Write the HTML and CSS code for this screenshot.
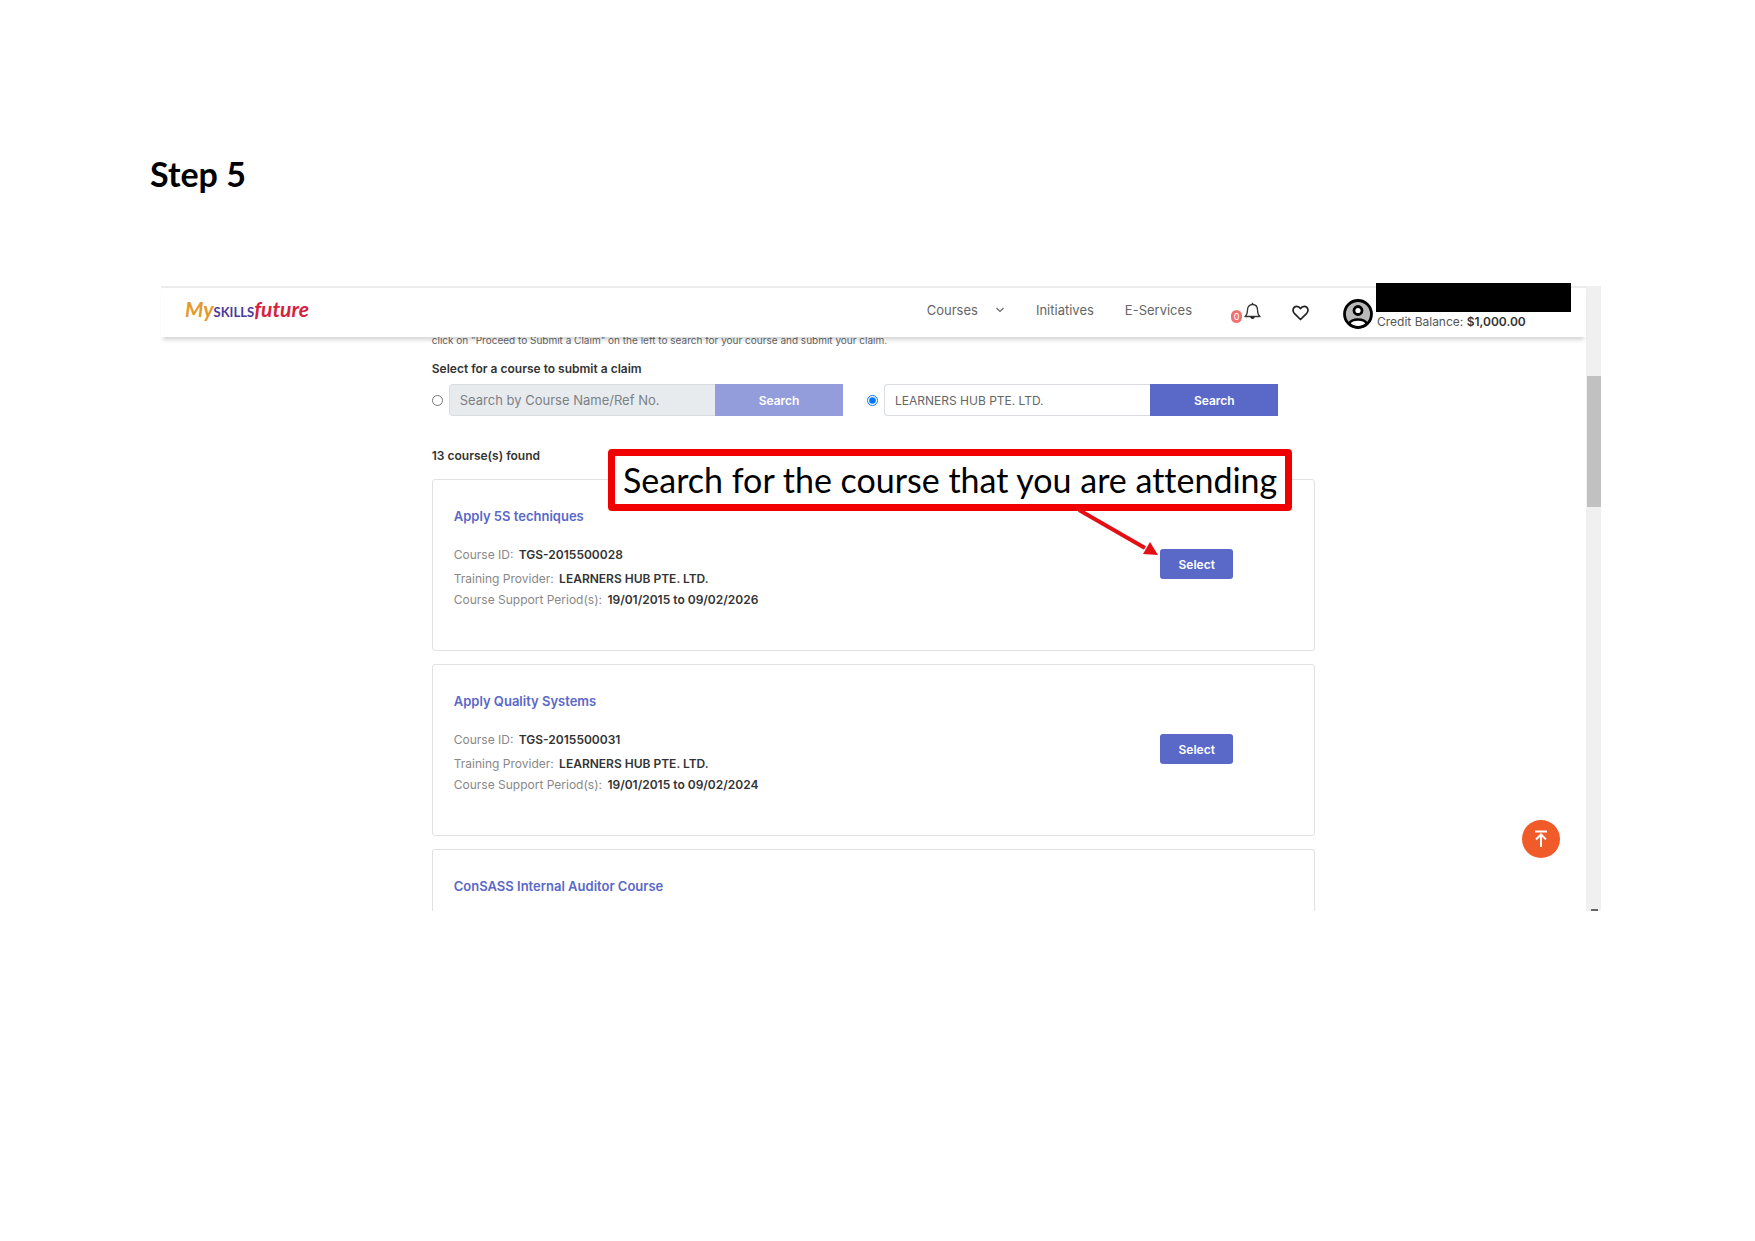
FILE: index.html
```html
<!DOCTYPE html>
<html lang="en">
<head>
  <meta charset="utf-8">
  <title>Step 5</title>
  <meta name="viewport" content="width=device-width, initial-scale=1.0">
  <link rel="stylesheet" href="styles.css">
</head>
<body>

  <h1>Step 5</h1>

  <div class="screen">
    <div class="view">
      <header class="topbar">
        <a class="logo" href="#"><span class="logo-my">My</span><span class="logo-skills">SKILLS</span><span class="logo-future">future</span></a>
        <nav class="menu">
          <a class="courses" href="#">Courses
            <svg width="10" height="6" viewBox="0 0 10 6"><path d="M1.5 1l3.5 3.5L8.500 1" fill="none" stroke="#666" stroke-width="1.2"/></svg>
          </a>
          <a href="#">Initiatives</a>
          <a href="#">E-Services</a>
        </nav>
        <button class="icon-btn bell" aria-label="Notifications">
          <span class="count">0</span>
          <svg width="17" height="18" viewBox="0 0 17 18"><path d="M1 14.500c2-1.500 2.500-3 2.500-6.500 0-3.500 2-5.500 5-5.500s5 2 5 5.500c0 3.500.5 5 2.500 6.500z" fill="none" stroke="#333" stroke-width="1.300" stroke-linejoin="round"/><path d="M8.500 2.500V.8" stroke="#333" stroke-width="1.500"/><path d="M6.300 15h4.400a2.200 2 0 0 1-4.400 0z" fill="#222"/></svg>
        </button>
        <button class="icon-btn heart" aria-label="Favourites">
          <svg width="17" height="16" viewBox="0 0 17 16"><path d="M8.500 14.500L2.300 8.300C-.2 5.500 1.300 1.300 4.700 1.300c1.700 0 3 .9 3.800 2.400.8-1.500 2.100-2.400 3.800-2.400 3.400 0 4.900 4.200 2.400 7z" fill="none" stroke="#222" stroke-width="1.700" stroke-linejoin="round"/></svg>
        </button>
        <div class="account">
          <svg width="30" height="30" viewBox="0 0 30 30"><circle cx="15" cy="15" r="13.500" fill="#b9b9b9"/><path d="M6 24.500c3-5.500 15-5.500 18 0-4.500 5-13.500 5-18 0z" fill="#fff" stroke="#000" stroke-width="2.500"/><circle cx="15" cy="11.500" r="4" fill="#fff" stroke="#000" stroke-width="2.800"/><circle cx="15" cy="15" r="13.500" fill="none" stroke="#000" stroke-width="2.800"/></svg>
          <span class="balance">Credit Balance: <b>$1,000.00</b></span>
          <span class="redacted"></span>
        </div>
      </header>

      <main class="content">
        <p class="hint">click on "Proceed to Submit a Claim" on the left to search for your course and submit your claim.</p>

        <h2 class="label">Select for a course to submit a claim</h2>
        <form class="search">
          <input type="radio" name="by" id="byCourse" aria-label="Search by course">
          <div class="group off">
            <input type="text" placeholder="Search by Course Name/Ref No." aria-label="Course name or ref no." disabled>
            <button type="button" disabled>Search</button>
          </div>
          <input type="radio" name="by" id="byProvider" aria-label="Search by training provider" checked>
          <div class="group">
            <input class="provider" type="text" value="LEARNERS HUB PTE. LTD." aria-label="Training provider">
            <button type="button">Search</button>
          </div>
        </form>

        <h2 class="found">13 course(s) found</h2>

        <div class="cards">
          <article class="card">
            <div>
              <h3><a href="#">Apply 5S techniques</a></h3>
              <p class="id">Course ID: <b>TGS-2015500028</b></p>
              <p>Training Provider: <b>LEARNERS HUB PTE. LTD.</b></p>
              <p>Course Support Period(s): <b>19/01/2015 to 09/02/2026</b></p>
            </div>
            <button class="select">Select</button>

            <div class="callout">
              Search for the course that you are attending
              <svg class="arrow" width="84" height="50" viewBox="0 0 84 50"><path d="M2 1l66 38" stroke="#e30f14" stroke-width="4"/><path d="M81 46l-15-1 7-12z" fill="#e30f14"/></svg>
            </div>
          </article>

          <article class="card">
            <div>
              <h3><a href="#">Apply Quality Systems</a></h3>
              <p class="id">Course ID: <b>TGS-2015500031</b></p>
              <p>Training Provider: <b>LEARNERS HUB PTE. LTD.</b></p>
              <p>Course Support Period(s): <b>19/01/2015 to 09/02/2024</b></p>
            </div>
            <button class="select">Select</button>
          </article>

          <article class="card cut">
            <h3><a href="#">ConSASS Internal Auditor Course</a></h3>
          </article>
        </div>
      </main>
    </div>

    <div class="scrollbar"><div class="thumb"></div><div class="tick"></div></div>

    <button class="to-top" aria-label="Back to top">
      <svg width="14" height="18" viewBox="0 0 14 18"><path d="M1 1.500h12M7 17V5M2 9.500l5-5 5 5" fill="none" stroke="#fff" stroke-width="2"/></svg>
    </button>
  </div>

</body>
</html>
```

FILE: styles.css
```css
* { box-sizing: border-box; }
body { margin: 0; padding: 154px 154px 40px 150px; background: #fff; color: #333; font-family: Inter, "Liberation Sans", sans-serif; font-size: 12px; }
h1, h2, h3, p { margin: 0; }
h1 { font: bold 34px/40px Lato, sans-serif; color: #000; }
a { color: inherit; text-decoration: none; }
button { font-family: inherit; border: 0; cursor: pointer; }

.screen { position: relative; display: flex; margin: 92px 0 0 11px; }
.view { flex: 1; }

/* top bar */
.topbar {
  position: relative; z-index: 1;
  display: flex; align-items: center;
  height: 51px; padding: 0 61px 0 24px;
  background: #fff; border-top: 2px solid #ececec;
  box-shadow: 0 5px 4px -2px rgba(0, 0, 0, .16);
}
.logo { display: flex; align-items: baseline; margin: 0 auto 8px 0; font-family: Lato, sans-serif; font-weight: bold; }
.logo-my { color: #e39a2d; font-size: 21px; font-style: italic; }
.logo-skills { color: #4b3a9c; font-size: 13px; }
.logo-future { color: #d4233f; font-size: 21px; font-style: italic; }
.menu { display: flex; gap: 31px; margin-bottom: 5px; color: #666; font-size: 13px; }
.courses { display: flex; align-items: center; gap: 17px; }
.icon-btn { display: flex; padding: 0; background: none; }
.bell { align-items: flex-end; gap: 2px; margin-left: 39px; }
.count { width: 11px; height: 13px; border-radius: 6px; background: #ee7474; color: #fff; font-size: 9px; line-height: 13px; }
.bell svg { margin-bottom: 3px; }
.heart { margin: 0 34px 0 31px; }
.account { position: relative; display: flex; gap: 4px; width: 182px; padding-top: 2px; color: #555; }
.account svg { flex-shrink: 0; }
.account b { color: #333; font-weight: 600; }
.balance { margin-top: 15px; white-space: nowrap; }
.redacted { position: absolute; top: -14px; left: 33px; width: 195px; height: 29px; background: #000; }

/* page content */
.content { width: 62%; margin: 0 auto; }
.hint { margin-top: -5px; color: #666; font-size: 10px; line-height: 16px; }
.label, .found { font-size: 12px; font-weight: 600; line-height: 20px; }
.label { margin-top: 11px; }
.found { margin-top: 30px; }
.search { display: flex; align-items: center; margin: 5px 37px 0 0; }
.search input[type=radio] { width: 11px; height: 11px; margin: 0 6px 0 0; }
.group { flex: 1; display: flex; height: 32px; }
.group.off { margin-right: 24px; }
.group input { flex: 1; min-width: 0; padding: 0 10px; border: 1px solid #d9dde1; border-right: 0; border-radius: 4px 0 0 4px; background: #fff; color: #666; font: 13px Inter, sans-serif; }
.group button { width: 128px; background: #5a68c8; color: #fff; font-size: 12px; font-weight: 600; }
.off input { background: #e8ebee; }
.off input::placeholder { color: #7b8087; }
.off button { background: #949ddb; }

.cards { display: flex; flex-direction: column; gap: 13px; margin-top: 13px; }
.card {
  position: relative;
  display: flex; align-items: center; justify-content: space-between;
  padding: 26px 81px 40px 21px;
  border: 1px solid #e2e2e4; border-radius: 3px;
}
.card h3 { color: #5a68c8; font-size: 13px; font-weight: 600; line-height: 20px; }
.card p { color: #888; font-size: 12px; line-height: 21px; }
.card p.id { margin: 18px 0 3px; }
.card b { margin-left: 2px; color: #333; font-weight: 600; }
.card.cut { padding-bottom: 15px; border-bottom: 0; border-radius: 3px 3px 0 0; }
.select { width: 73px; height: 30px; margin-top: 12px; border-radius: 3px; background: #5a68c8; color: #fff; font-size: 12px; font-weight: 600; }
.group .provider { font-size: 12px; }

/* red note over the first card */
.callout {
  position: absolute; top: -31px; right: 22px;
  padding: 0 8px;
  border: 7px solid #f00000; border-radius: 4px;
  background: rgba(255, 255, 255, .85);
  color: #000; font: 34px/48px Lato, sans-serif; font-variant-ligatures: none; white-space: nowrap;
}
.arrow { position: absolute; top: 53px; right: 124px; }

.scrollbar { display: flex; flex-direction: column; align-items: flex-end; width: 15px; background: #f0f0f0; }
.thumb { width: 14px; height: 131px; margin-top: 90px; background: #c1c1c1; }
.tick { width: 7px; height: 2px; margin: auto 3px 0 0; background: #666; }

.to-top {
  position: absolute; right: 41px; bottom: 53px;
  display: flex; align-items: center; justify-content: center;
  width: 38px; height: 38px; padding: 0;
  border-radius: 50%; background: #f15a29;
}
```
